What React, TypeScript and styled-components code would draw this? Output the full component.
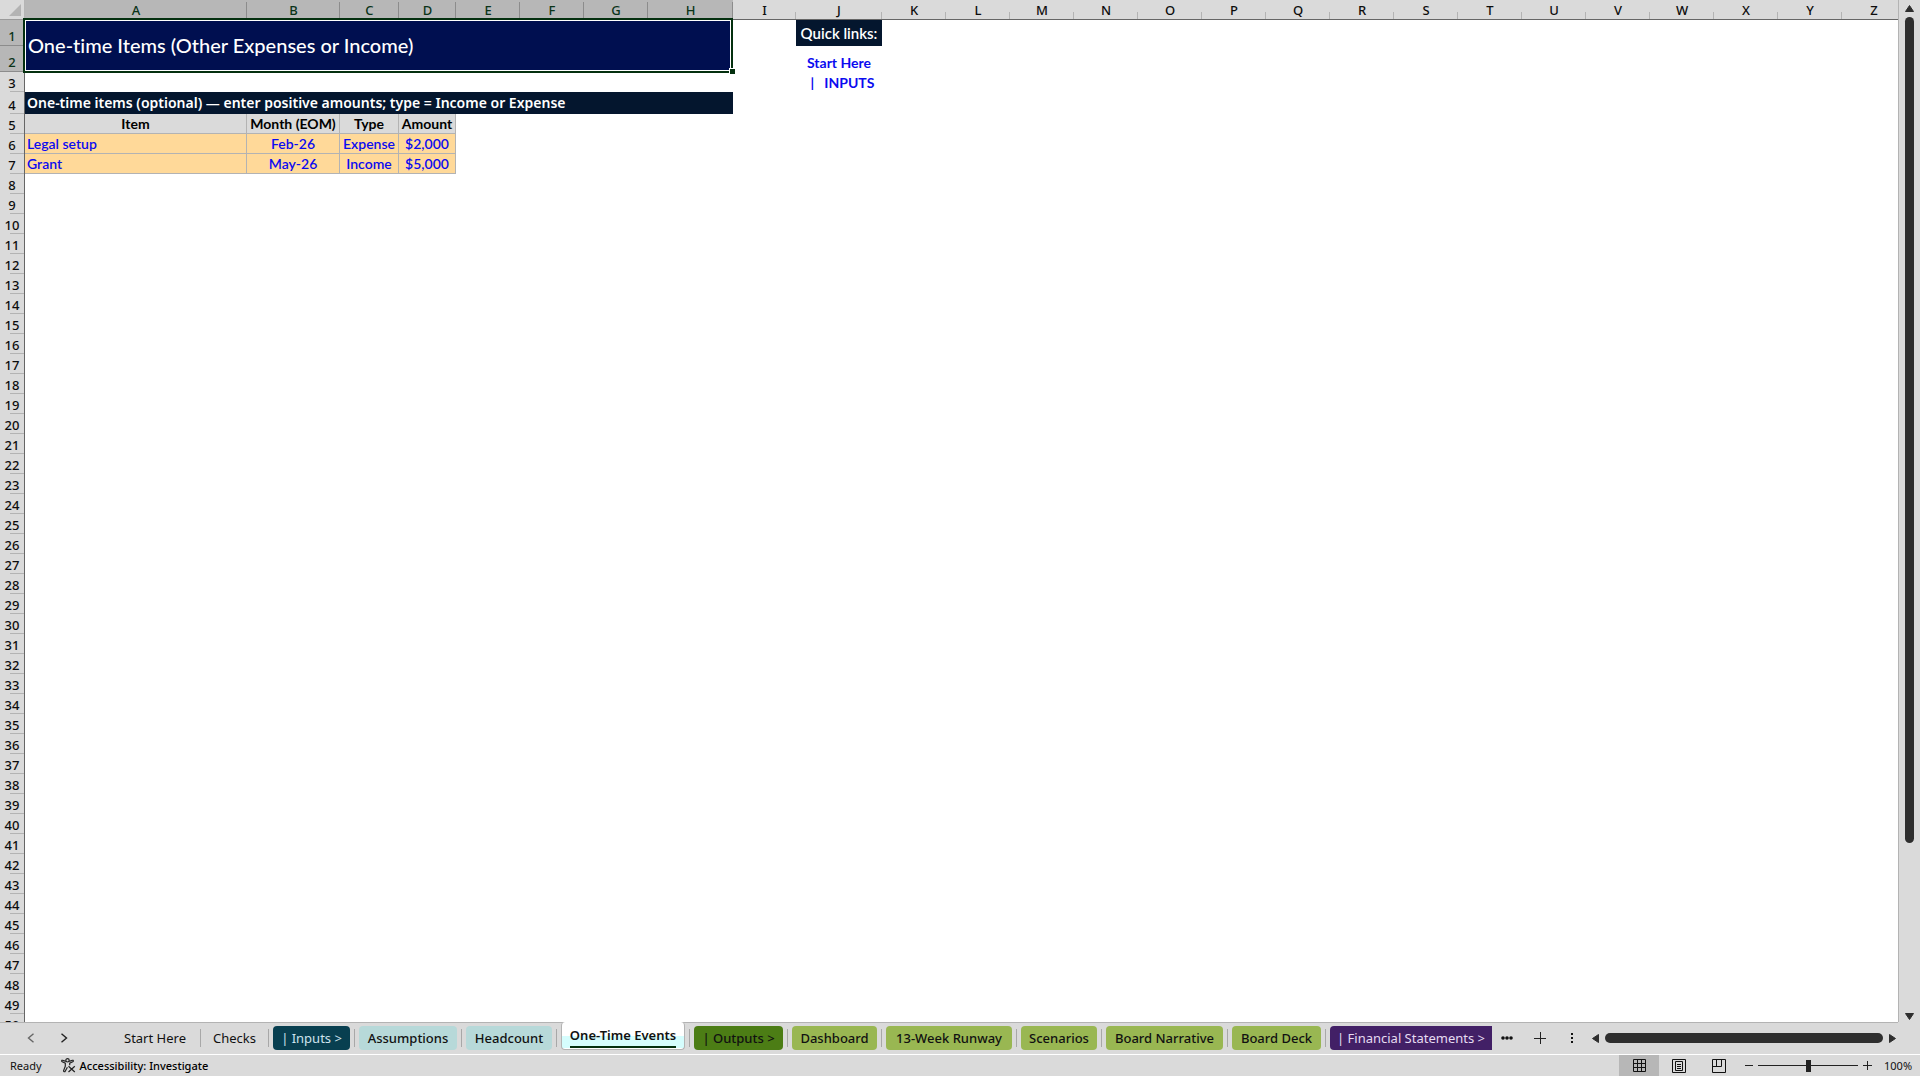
import React, { useState } from "react";
import styled, { createGlobalStyle, css } from "styled-components";

const ui = '"Noto Sans", "Open Sans", "Liberation Sans", sans-serif';
const cellFont = 'Lato, "Open Sans", "Liberation Sans", sans-serif';

const GlobalStyle = createGlobalStyle`
  *, *::before, *::after { box-sizing: border-box; }
  body { margin: 0; background: #dadada; }
  button { font: inherit; color: inherit; background: none; border: 0; padding: 0; }
`;

const Workbook = styled.div`
  display: flex;
  flex-direction: column;
  height: 100vh;
  overflow: hidden;
  background: #dadada;
  font-family: ${ui};
`;

const SheetArea = styled.main`
  display: flex;
  flex: 1;
  min-height: 0;
`;

const GridPane = styled.div`
  flex: 1;
  min-width: 0;
  overflow: hidden;
  background: #fff;
`;

const Grid = styled.table`
  table-layout: fixed;
  width: 1906px;
  border-collapse: separate;
  border-spacing: 0;
  font-family: ${cellFont};
  font-size: 14px;
  line-height: 16px;
  font-weight: 600;
  font-variant-ligatures: none;
  td, th { padding: 0; }
`;

const Col = styled.col<{ $w: number }>`
  width: ${(p) => p.$w}px;
`;

const Row = styled.tr<{ $h: number }>`
  height: ${(p) => p.$h}px;
`;

const Corner = styled.th`
  background: #dadada;
  border-right: 1px solid #b5b5b5;
  border-bottom: 1px solid #9a9a9a;
  vertical-align: top;
  svg { display: block; margin: 4px 0 0 9px; }
`;

const ColHead = styled.th<{ $on: boolean }>`
  height: 20px;
  font-weight: 500;
  font-family: ${ui};
  font-size: 13px;
  line-height: 18px;
  color: ${(p) => (p.$on ? "#0a3318" : "#0d0d0d")};
  border-bottom: 1px solid #666;
  background: ${(p) =>
    p.$on
      ? "linear-gradient(#8c8c8c, #8c8c8c) right 0 top 2px / 1px 16px no-repeat #b7b7b7"
      : "linear-gradient(#b3b3b3, #b3b3b3) right 0 bottom 0 / 1px 7px no-repeat #dadada"};
`;

const RowHead = styled.th<{ $on: boolean }>`
  && { padding-bottom: ${(p) => (p.$on ? 1 : 0)}px; }
  text-align: center;
  vertical-align: bottom;
  font-weight: 500;
  font-family: ${ui};
  font-size: 13px;
  line-height: 18px;
  color: ${(p) => (p.$on ? "#0a3318" : "#0d0d0d")};
  border-right: 1px solid #666;
  background: ${(p) =>
    p.$on
      ? "linear-gradient(#8c8c8c, #8c8c8c) left 0 bottom 0 / 24px 1px no-repeat #b7b7b7"
      : "linear-gradient(#b3b3b3, #b3b3b3) left 10px bottom 0 / 14px 1px no-repeat #dadada"};
`;

const TitleCell = styled.td`
  position: relative;
  background: #000f50;
  color: #fff;
  font-size: 20px;
  line-height: 24px;
  font-weight: 500;
  && { padding: 0 3px 2px; }
`;

const Selection = styled.div`
  position: absolute;
  inset: -2px 0 -1px -2px;
  border: 2px solid #04300f;
  box-shadow: inset 0 0 0 1px #fff;
  pointer-events: none;
  &::after {
    content: "";
    position: absolute;
    right: -4px;
    bottom: -3px;
    width: 6px;
    height: 6px;
    background: #04300f;
    border: solid #fff;
    border-width: 1px 0 0 1px;
  }
`;

const Band = styled.td`
  background: #04162e;
  color: #fff;
  font-family: ${ui};
  font-weight: 600;
  && { padding: 0 2px; }
`;

const QuickLabel = styled.td`
  background: #04162e;
  color: #fff;
  font-size: 15px;
  text-align: center;
  white-space: nowrap;
`;

const LinkCell = styled.td`
  && { padding-bottom: 1px; }
  text-align: center;
  white-space: pre;
  vertical-align: bottom;
  a { color: #0b0bf0; font-weight: 700; text-decoration: none; }
`;

const HeadCell = styled.td`
  background: #dadada;
  border: solid #b3b3b3;
  border-width: 0 1px 1px 0;
  text-align: center;
  white-space: nowrap;
  font-weight: 700;
  color: #000;
  && { padding-top: 1px; }
`;

const InputCell = styled.td<{ $left?: boolean }>`
  background: #ffd999;
  border: solid #b3b3b3;
  border-width: 0 1px 1px 0;
  text-align: ${(p) => (p.$left ? "left" : "center")};
  color: #0b0bf0;
  && { padding: 1px 2px 0; }
`;

const VScroll = styled.div`
  display: flex;
  flex-direction: column;
  align-items: center;
  justify-content: space-between;
  width: 22px;
  padding: 5px 0 2px;
  border-left: 1px solid #b3b3b3;
  svg { display: block; }
`;

const VTrack = styled.div`
  flex: 1;
  margin: 5px 0;
`;

const VThumb = styled.div`
  width: 9px;
  height: calc(100% * 5 / 6);
  border-radius: 5px;
  background: #2e2e2e;
`;

const TabBar = styled.nav`
  display: flex;
  height: 32px;
  font-size: 13px;
  line-height: 20px;
  color: #111;
  background: linear-gradient(#b3b3b3, #b3b3b3) left top / calc(100% - 22px) 1px no-repeat #dadada;
`;

const NavButtons = styled.div`
  display: flex;
  gap: 25px;
  padding: 0 46px 0 27px;
  align-items: center;
  svg { display: block; }
`;

type Tone = "plain" | "teal" | "aqua" | "active" | "green" | "lime" | "purple";

const tones: Record<Tone, ReturnType<typeof css>> = {
  plain: css``,
  teal: css`background: #083f50; color: #cfe3ee;`,
  aqua: css`background: #b7d9d9; font-weight: 500;`,
  active: css`
    height: 28px;
    margin-top: 0;
    border: solid #b3b3b3;
    border-width: 0 1px 1px;
    background: linear-gradient(#fff 14px, #d5fdfd 14px, #d5fdfd 26px, #fff 26px);
    font-weight: 600;
  `,
  green: css`background: #4c7d15; font-weight: 500;`,
  lime: css`background: #99b752; font-weight: 500;`,
  purple: css`background: #422066; color: #e6dcf2; border-radius: 4px 0 0 4px;`,
};

const TabButton = styled.button<{ $w: number; $tone: Tone }>`
  && {
    flex: none;
    width: ${(p) => p.$w}px;
    height: 24px;
    margin-top: 4px;
    border-radius: 4px;
    white-space: nowrap;
    ${(p) => tones[p.$tone]}
  }
`;

const ActiveLabel = styled.span`
  display: inline-block;
  border-bottom: 2px solid #04300f;
  line-height: 22px;
`;

const Divider = styled.span`
  flex: none;
  width: 1px;
  height: 18px;
  margin: 7px 4px 0;
  background: #a8a8a8;
`;

const TabTools = styled.div`
  display: flex;
  flex: none;
  align-items: center;
  gap: 20px;
  padding: 0 12px 0 8px;
  svg { display: block; }
`;

const HScroll = styled.div`
  display: flex;
  flex: 1;
  align-items: center;
  gap: 6px;
  padding-right: 24px;
  svg { display: block; }
`;

const HThumb = styled.div`
  flex: 1;
  height: 10px;
  border-radius: 5px;
  background: #2e2e2e;
`;

const StatusBar = styled.footer`
  display: flex;
  align-items: center;
  height: 22px;
  border-top: 1px solid #fff;
  padding: 0 8px 0 10px;
  font-size: 11px;
  line-height: 16px;
  color: #111;
`;

const AccessButton = styled.button`
  && {
    display: flex;
    align-items: center;
    gap: 4px;
    margin-left: 19px;
    font-weight: 500;
    color: #000;
  }
`;

const Spacer = styled.div`
  flex: 1;
`;

const ViewButton = styled.button<{ $on?: boolean }>`
  && {
    display: grid;
    place-items: center;
    width: 40px;
    height: 21px;
    background: ${(p) => (p.$on ? "#b7b7b7" : "transparent")};
  }
`;

const Zoom = styled.div`
  display: flex;
  align-items: center;
  gap: 5px;
  margin-left: 5px;
  button { display: grid; place-items: center; }
`;

const ZoomSlider = styled.input`
  appearance: none;
  width: 100px;
  height: 12px;
  margin: 0;
  background: linear-gradient(#222, #222) center / 100% 1px no-repeat;
  &::-webkit-slider-thumb {
    appearance: none;
    width: 5px;
    height: 12px;
    background: #222;
  }
`;

const ZoomValue = styled.span`
  width: 28px;
  margin-left: 7px;
  text-align: right;
`;

const letters = "ABCDEFGHIJKLMNOPQRSTUVWXYZ".split("");
const firstWidths = [222, 93, 59, 57, 64, 64, 64, 85, 63, 86];
const widths = letters.map((_, i) => firstWidths[i] ?? 64);

const items = [
  { item: "Legal setup", month: "Feb-26", type: "Expense", amount: "$2,000" },
  { item: "Grant", month: "May-26", type: "Income", amount: "$5,000" },
];

const emptyRows = Array.from({ length: 43 }, (_, i) => i + 8);

const tabs: { name: string; w: number; tone: Tone }[] = [
  { name: "Start Here", w: 82, tone: "plain" },
  { name: "Checks", w: 59, tone: "plain" },
  { name: "| Inputs >", w: 77, tone: "teal" },
  { name: "Assumptions", w: 98, tone: "aqua" },
  { name: "Headcount", w: 86, tone: "aqua" },
  { name: "One-Time Events", w: 124, tone: "active" },
  { name: "| Outputs >", w: 89, tone: "green" },
  { name: "Dashboard", w: 85, tone: "lime" },
  { name: "13-Week Runway", w: 126, tone: "lime" },
  { name: "Scenarios", w: 76, tone: "lime" },
  { name: "Board Narrative", w: 117, tone: "lime" },
  { name: "Board Deck", w: 89, tone: "lime" },
  { name: "| Financial Statements >", w: 162, tone: "purple" },
];

const Arrow = ({ dir }: { dir: "up" | "down" | "left" | "right" }) => {
  const shapes = {
    up: "M4.5 0.5 8.5 6.5H0.5Z",
    down: "M0.5 0.5H8.5L4.5 6.5Z",
    left: "M6.5 0.5V8.5L0.5 4.5Z",
    right: "M0.5 0.5 6.5 4.5 0.5 8.5Z",
  };
  const vertical = dir === "up" || dir === "down";
  return (
    <svg width={vertical ? 9 : 7} height={vertical ? 7 : 9} aria-hidden="true">
      <path d={shapes[dir]} fill="#2e2e2e" stroke="#2e2e2e" strokeLinejoin="round" />
    </svg>
  );
};

const Chevron = ({ next }: { next?: boolean }) => (
  <svg width="8" height="10" fill="none" stroke={next ? "#222" : "#666"} strokeWidth="1.4" aria-hidden="true">
    <path d={next ? "M1.5 0.8 6.5 5 1.5 9.2" : "M6.5 0.8 1.5 5 6.5 9.2"} />
  </svg>
);

const AccessIcon = () => (
  <svg width="15" height="15" viewBox="0 0 15 15" fill="none" stroke="#222" strokeWidth="1.2" aria-hidden="true">
    <circle cx="6.5" cy="2.3" r="1.7" />
    <path d="M4.8 3.4 1.6 2.3C.6 2 .3 3.4 1.2 3.8L4.3 5.2V8.2L2.6 12.6C2.4 13.8 3.8 14.1 4.2 13.2L6.4 9.2M8.2 3.4 11.4 2.3C12.4 2 12.7 3.4 11.8 3.8L8.7 5.2V7.2" />
    <path d="M7.5 8.2 13.8 14M13.8 8.2 7.5 14" />
  </svg>
);

export default function App() {
  const [active, setActive] = useState("One-Time Events");
  return (
    <Workbook>
      <GlobalStyle />
      <SheetArea>
        <GridPane>
          <Grid>
            <colgroup>
              <Col $w={25} />
              {letters.map((l, i) => <Col key={l} $w={widths[i]} />)}
            </colgroup>
            <thead>
              <Row $h={20}>
                <Corner aria-label="Select all">
                  <svg width="12" height="12" aria-hidden="true"><path d="M12 0V12H0Z" fill="#b3b3b3" /></svg>
                </Corner>
                {letters.map((l, i) => <ColHead key={l} scope="col" $on={i < 8}>{l}</ColHead>)}
              </Row>
            </thead>
            <tbody>
              <Row $h={26}>
                <RowHead scope="row" $on>1</RowHead>
                <TitleCell colSpan={8} rowSpan={2}>
                  One-time Items (Other Expenses or Income)
                  <Selection />
                </TitleCell>
                <td />
                <QuickLabel>Quick links:</QuickLabel>
                <td colSpan={16} />
              </Row>
              <Row $h={26}>
                <RowHead scope="row" $on>2</RowHead>
                <td />
                <LinkCell><a href="#start-here">Start Here</a></LinkCell>
                <td colSpan={16} />
              </Row>
              <Row $h={20}>
                <RowHead scope="row" $on={false}>3</RowHead>
                <td colSpan={9} />
                <LinkCell><a href="#inputs">{"  |   INPUTS"}</a></LinkCell>
                <td colSpan={16} />
              </Row>
              <Row $h={22}>
                <RowHead scope="row" $on={false}>4</RowHead>
                <Band colSpan={8}>One-time items (optional) — enter positive amounts; type = Income or Expense</Band>
                <td colSpan={18} />
              </Row>
              <Row $h={20}>
                <RowHead scope="row" $on={false}>5</RowHead>
                <HeadCell>Item</HeadCell>
                <HeadCell>Month (EOM)</HeadCell>
                <HeadCell>Type</HeadCell>
                <HeadCell>Amount</HeadCell>
                <td colSpan={22} />
              </Row>
              {items.map((it, i) => (
                <Row $h={20} key={it.item}>
                  <RowHead scope="row" $on={false}>{6 + i}</RowHead>
                  <InputCell $left>{it.item}</InputCell>
                  <InputCell>{it.month}</InputCell>
                  <InputCell>{it.type}</InputCell>
                  <InputCell>{it.amount}</InputCell>
                  <td colSpan={22} />
                </Row>
              ))}
              {emptyRows.map((n) => (
                <Row $h={20} key={n}>
                  <RowHead scope="row" $on={false}>{n}</RowHead>
                  <td colSpan={26} />
                </Row>
              ))}
            </tbody>
          </Grid>
        </GridPane>
        <VScroll>
          <Arrow dir="up" />
          <VTrack><VThumb /></VTrack>
          <Arrow dir="down" />
        </VScroll>
      </SheetArea>
      <TabBar aria-label="Sheets">
        <NavButtons>
          <button aria-label="Previous sheets"><Chevron /></button>
          <button aria-label="Next sheets"><Chevron next /></button>
        </NavButtons>
        {tabs.map((t, i) => (
          <React.Fragment key={t.name}>
            {i > 0 && <Divider />}
            <TabButton $w={t.w} $tone={t.tone} onClick={() => setActive(t.name)} aria-current={t.name === active}>
              {t.tone === "active" ? <ActiveLabel>{t.name}</ActiveLabel> : t.name}
            </TabButton>
          </React.Fragment>
        ))}
        <TabTools>
          <button aria-label="More sheets">
            <svg width="14" height="4"><g fill="#111"><circle cx="3" cy="2" r="1.8" /><circle cx="7" cy="2" r="1.8" /><circle cx="11" cy="2" r="1.8" /></g></svg>
          </button>
          <button aria-label="New sheet">
            <svg width="12" height="12" stroke="#222"><path d="M6.5 0V12M0 6.5H12" /></svg>
          </button>
          <button aria-label="Resize tabs">
            <svg width="14" height="12"><g fill="#111"><rect x="5" y="1" width="2" height="2" /><rect x="5" y="5" width="2" height="2" /><rect x="5" y="9" width="2" height="2" /></g></svg>
          </button>
        </TabTools>
        <HScroll>
          <Arrow dir="left" />
          <HThumb />
          <Arrow dir="right" />
        </HScroll>
      </TabBar>
      <StatusBar>
        <span>Ready</span>
        <AccessButton><AccessIcon />Accessibility: Investigate</AccessButton>
        <Spacer />
        <ViewButton $on aria-label="Normal view">
          <svg width="13" height="13" fill="none" stroke="#111"><path d="M.5.5H12.5V12.5H.5ZM4.5 0V13M8.5 0V13M0 4.5H13M0 8.5H13" /></svg>
        </ViewButton>
        <ViewButton aria-label="Page layout view">
          <svg width="14" height="14" fill="none" stroke="#111"><path d="M.5.5H13.5V13.5H.5ZM3.5 2.5H10.5V11.5H3.5ZM5 5.5H9M5 7.5H9M5 9.5H9" /></svg>
        </ViewButton>
        <ViewButton aria-label="Page break preview">
          <svg width="14" height="14" fill="none" stroke="#111"><path d="M.5.5H13.5V13.5H.5ZM4.5 0V7.5M9.5 0V7.5M0 7.5H9.5" /></svg>
        </ViewButton>
        <Zoom>
          <button aria-label="Zoom out"><svg width="9" height="9" stroke="#222"><path d="M1 4.5H9" /></svg></button>
          <ZoomSlider type="range" min={0} max={100} defaultValue={50} aria-label="Zoom" />
          <button aria-label="Zoom in"><svg width="9" height="9" stroke="#222"><path d="M4.5 0V9M0 4.5H9" /></svg></button>
          <ZoomValue>100%</ZoomValue>
        </Zoom>
      </StatusBar>
    </Workbook>
  );
}
